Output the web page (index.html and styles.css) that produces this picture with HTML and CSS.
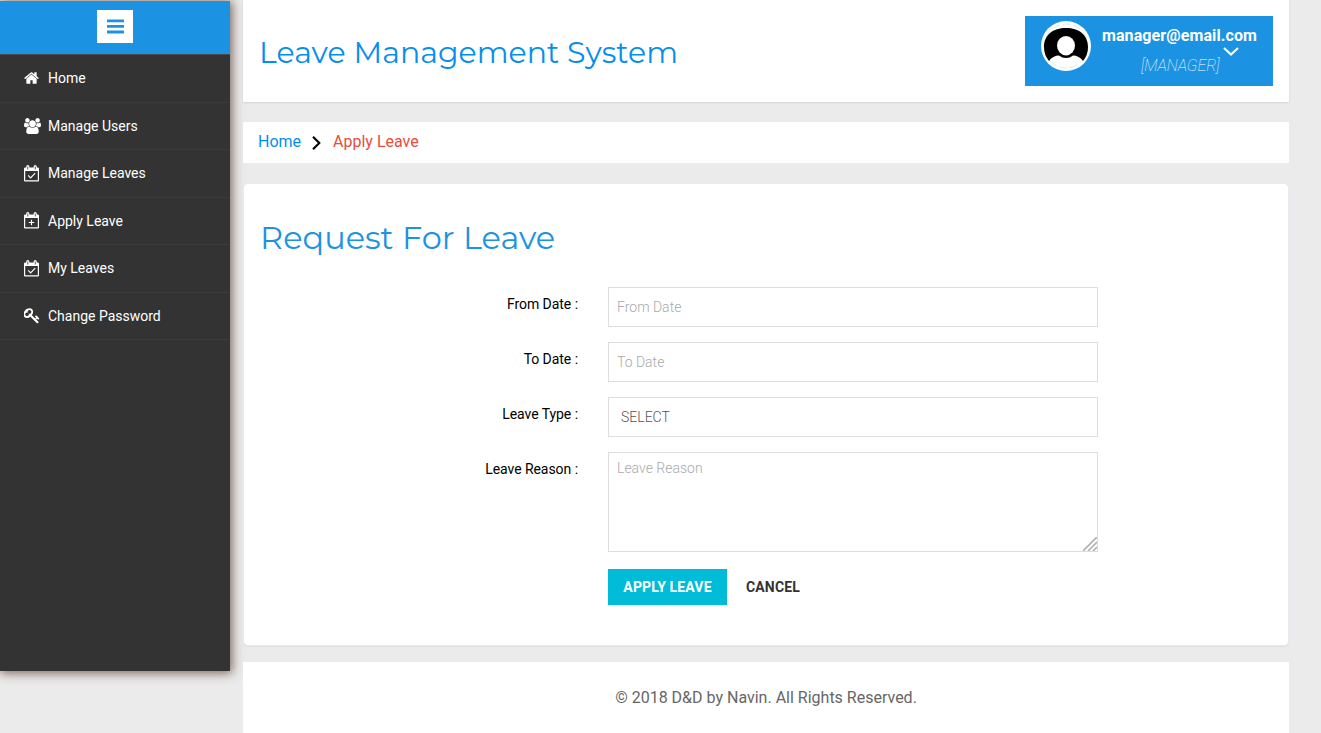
FILE: index.html
```html
<!DOCTYPE html>
<html lang="en">
<head>
<meta charset="utf-8">
<title>Leave Management System</title>
<link rel="stylesheet" href="styles.css">
</head>
<body>
<svg class="defs" width="0" height="0">
  <symbol id="home" viewBox="64 0 1664 1792"><path d="M1472 992v480q0 26-19 45t-45 19h-384v-384h-256v384h-384q-26 0-45-19t-19-45v-480q0-1 .5-3t.5-3l575-474 575 474q1 2 1 6zm223-69l-62 74q-8 9-21 11h-3q-13 0-21-7l-692-577-692 577q-12 8-24 7-13-2-21-11l-62-74q-8-10-7-23.5t11-21.5l719-599q32-26 76-26t76 26l244 204v-195q0-14 9-23t23-9h192q14 0 23 9t9 23v408l219 182q10 8 11 21.5t-7 23.5z"/></symbol>
  <symbol id="users" viewBox="-64 0 1920 1792"><path d="M529 896q-162 5-265 128h-134q-82 0-138-40.5t-56-118.5q0-353 124-353 6 0 43.5 21t97.5 42.5 119 21.5q67 0 133-23-5 37-5 66 0 139 81 256zm1071 637q0 120-73 189.5t-194 69.5h-874q-121 0-194-69.5t-73-189.5q0-53 3.5-103.5t14-109 26.5-108.5 43-97.5 62-81 85.5-53.5 111.5-20q10 0 43 21.5t73 48 107 48 135 21.5 135-21.5 107-48 73-48 43-21.5q61 0 111.5 20t85.5 53.5 62 81 43 97.5 26.5 108.5 14 109 3.5 103.5zm-1024-1277q0 106-75 181t-181 75-181-75-75-181 75-181 181-75 181 75 75 181zm704 384q0 159-112.5 271.5t-271.5 112.5-271.5-112.5-112.5-271.5 112.5-271.5 271.5-112.5 271.5 112.5 112.5 271.5zm576 225q0 78-56 118.5t-138 40.5h-134q-103-123-265-128 81-117 81-256 0-29-5-66 66 23 133 23 59 0 119-21.5t97.5-42.5 43.5-21q124 0 124 353zm-128-609q0 106-75 181t-181 75-181-75-75-181 75-181 181-75 181 75 75 181z"/></symbol>
  <symbol id="cal" viewBox="0 0 15 17"><path fill-rule="evenodd" d="M1.2 2.6H2.2V1.7A1.6 1.6 0 0 1 5.4 1.7V2.6H9.6V1.7A1.6 1.6 0 0 1 12.8 1.7V2.6H13.8A1.2 1.2 0 0 1 15 3.8V15.4A1.1 1.1 0 0 1 13.8 16.5H1.2A1.1 1.1 0 0 1 0 15.4V3.8A1.2 1.2 0 0 1 1.2 2.6ZM1.2 6V15.3H13.8V6ZM3.4 1.6V4.6H4.2V1.6ZM10.8 1.6V4.6H11.6V1.6Z"/></symbol>
  <symbol id="calcheck" viewBox="0 0 15 17"><use href="#cal" width="15" height="17"/><path fill="none" stroke="#fff" stroke-width="1.2" d="M4.2 10.4l2.4 2.4 4.6-4.6"/></symbol>
  <symbol id="calplus" viewBox="0 0 15 17"><use href="#cal" width="15" height="17"/><path fill="none" stroke="#fff" stroke-width="1.2" d="M7.5 7.7v5.6M4.7 10.5h5.6"/></symbol>
  <symbol id="key" viewBox="64 0 1792 1792"><path d="M832 512q0-80-56-136t-136-56-136 56-56 136q0 42 19 83-41-19-83-19-80 0-136 56t-56 136 56 136 136 56 136-56 56-136q0-42-19-83 41 19 83 19 80 0 136-56t56-136zm851 704q0 17-49 66t-66 49q-9 0-28.5-16t-36.5-33-38.5-40-24.5-26l-96 96 220 220q28 28 28 68 0 42-39 81t-81 39q-40 0-68-28l-671-671q-176 131-365 131-163 0-265.5-102.5t-102.5-265.5q0-160 95-313t248-248 313-95q163 0 265.5 102.5t102.5 265.5q0 189-131 365l355 355 96-96q-3-3-26-24.5t-40-38.5-33-36.5-16-28.5q0-17 49-66t66-49q13 0 23 10 6 6 46 44.5t82 79.5 86.5 86 73 78 28.5 41z"/></symbol>
</svg>
<div class="page">
  <aside class="sidebar">
    <div class="brand"><a class="toggle"><svg width="17" height="15" viewBox="0 0 17 15"><path fill="#1c93e2" d="M0 .4h17v2.8H0zM0 6h17v2.8H0zM0 11.6h17v2.8H0z"/></svg></a></div>
    <nav class="menu">
      <a class="item"><svg class="icon w-home"><use href="#home"/></svg><span>Home</span></a>
      <a class="item"><svg class="icon w-users"><use href="#users"/></svg><span>Manage Users</span></a>
      <a class="item"><svg class="icon w-cal"><use href="#calcheck"/></svg><span>Manage Leaves</span></a>
      <a class="item"><svg class="icon w-cal"><use href="#calplus"/></svg><span>Apply Leave</span></a>
      <a class="item"><svg class="icon w-cal"><use href="#calcheck"/></svg><span>My Leaves</span></a>
      <a class="item"><svg class="icon w-key"><use href="#key"/></svg><span>Change Password</span></a>
    </nav>
  </aside>
  <main class="main">
    <header class="header">
      <h1 class="title">Leave Management System</h1>
      <div class="profile">
        <svg class="avatar" viewBox="0 0 50 50">
          <circle cx="25" cy="25" r="25" fill="#fff"/>
          <circle cx="25" cy="25" r="21.9" fill="none" stroke="#c9e6fa" stroke-width=".8" stroke-dasharray="8 3"/>
          <path d="M8 40Q3 34 3 26C3 14 12 7 25 7S47 14 47 26Q47 34 42 40Q38 34.5 32 34.5Q29 37 25 37T18 34.5Q12 34.5 8 40z"/>
          <ellipse cx="25" cy="24.7" rx="9" ry="9.7" fill="#fff"/>
        </svg>
        <div class="who">
          <div class="email">manager@email.com</div>
          <div class="role">[MANAGER]</div>
          <svg class="chevron" width="16" height="9" viewBox="0 0 16 9"><path fill="none" stroke="#fff" stroke-width="2" d="M1 1l7 6.6L15 1"/></svg>
        </div>
      </div>
    </header>
    <div class="crumbs"><a class="crumb">Home</a><svg width="9" height="14" viewBox="0 0 9 14"><path fill="none" stroke="#000" stroke-width="2.1" d="M1 .8l6.3 6.2L1 13.2"/></svg><span class="current">Apply Leave</span></div>
    <section class="card">
      <h2 class="subtitle">Request For Leave</h2>
      <form class="form">
        <label class="label">From Date :</label><input class="field" placeholder="From Date">
        <label class="label">To Date :</label><input class="field" placeholder="To Date">
        <label class="label">Leave Type :</label><select class="field select"><option>SELECT</option></select>
        <label class="label">Leave Reason :</label>
        <div class="areawrap"><textarea class="field area" placeholder="Leave Reason"></textarea><svg class="grip" width="14" height="14" viewBox="0 0 14 14"><path stroke="#b2b2b2" stroke-width="1.7" d="M0 14L14 0M5 14L14 5M10 14l4-4"/></svg></div>
        <div class="actions"><button type="button" class="apply">APPLY LEAVE</button><button type="button" class="cancel">CANCEL</button></div>
      </form>
    </section>
    <footer class="footer">© 2018 D&amp;D by Navin. All Rights Reserved.</footer>
  </main>
</div>
</body>
</html>
```
FILE: styles.css
```css
* { box-sizing: border-box; }
body { margin: 0; background: #ebebeb; font-family: Roboto, "Liberation Sans", sans-serif; font-size: 14px; overflow: hidden; }
.defs { position: absolute; }
.page { display: flex; align-items: flex-start; height: 733px; overflow: hidden; }
.sidebar { width: 230px; height: 670px; margin-top: 1px; flex: none; background: #333; box-shadow: 1px 1px 10px 1px rgba(92,64,51,.8); }
.brand { height: 53px; background: #1c93e2; display: flex; justify-content: center; padding-top: 9px; }
.toggle { width: 36px; height: 33px; background: #fff; display: flex; align-items: center; justify-content: center; }
.menu { border-top: 1px solid #4b4b4b; }
.item { display: flex; align-items: center; height: 47.5px; padding-left: 24px; border-bottom: 1px solid #3a3a3a; color: #fff; line-height: 20px; }
.item span { margin-left: auto; width: 182px; }
.icon { width: 15px; height: 16px; fill: #fff; flex: none; }
.w-users { width: 17px; }
.w-cal { height: 17px; }
.w-key { width: 17px; height: 17px; }
.main { width: 1046px; margin-left: 13px; flex: none; }
.header { height: 102px; background: #fff; box-shadow: 0 1px 2px rgba(0,0,0,.1); display: flex; justify-content: space-between; padding: 16px 16px 0 16px; }
.title, .subtitle { margin: 0; font-family: Montserrat, Inter, sans-serif; font-weight: 400; white-space: nowrap; }
.title { color: #058eeb; font-size: 30px; line-height: 38px; padding-top: 18px; letter-spacing: .03px; }
.profile { width: 248px; height: 70px; background: #1c93e2; color: #fff; display: flex; padding: 5px 0 0 16px; }
.avatar { width: 50px; height: 50px; }
.who { position: relative; margin-left: 11px; width: 157px; font-size: 16px; }
.email { font-weight: 700; line-height: 20px; padding-top: 5px; letter-spacing: .1px; }
.role { font-weight: 100; font-style: italic; line-height: 20px; margin: 10px 0 0 39px; letter-spacing: -.1px; }
.chevron { position: absolute; left: 121px; top: 26px; }
.crumbs { margin-top: 20px; height: 41px; background: #fff; display: flex; align-items: flex-start; padding: 10px 15px 0; font-size: 16px; line-height: 20px; }
.crumbs svg { margin: 4px 12px 0 11px; }
.crumb { color: #058eeb; }
.current { color: #e74c3c; }
.card { margin: 20px 0 0; height: 463px; background: #fff; border: 1px solid #e7ebf1; border-radius: 5px; box-shadow: 0 1px 1px rgba(0,0,0,.05); padding: 34px 16px 0; }
.subtitle { color: #1c93e2; font-size: 32px; line-height: 40px; }
.form { display: grid; grid-template-columns: 318px 490px; column-gap: 30px; row-gap: 15px; margin-top: 29px; }
.label { text-align: right; color: #000; line-height: 20px; padding-top: 7px; letter-spacing: -.05px; }
.field { display: block; width: 490px; height: 40px; margin: 0; border: 1px solid #ddd; border-radius: 0; background: #fff; padding: 5px 8px; font: 300 14px/20px Roboto, sans-serif; color: #555; outline: 0; }
.field::placeholder { color: #aaa; opacity: 1; }
.select { appearance: none; padding-left: 12px; }
.areawrap { position: relative; height: 100px; }
.area { height: 100px; resize: none; }
.grip { position: absolute; right: 1px; bottom: 1px; }
.actions { grid-column: 2; margin-top: 2px; display: flex; }
.apply, .cancel { height: 36px; border: 0; padding: 0 15px; font: 700 14px/20px Roboto, sans-serif; letter-spacing: .15px; }
.apply { width: 119px; background: #00bcd8; color: #fff; }
.cancel { margin-left: 4px; background: transparent; color: #333; }
.footer { margin-top: 16px; height: 80px; background: #fff; text-align: center; color: #666; font-size: 16px; line-height: 20px; padding-top: 26px; }
```
